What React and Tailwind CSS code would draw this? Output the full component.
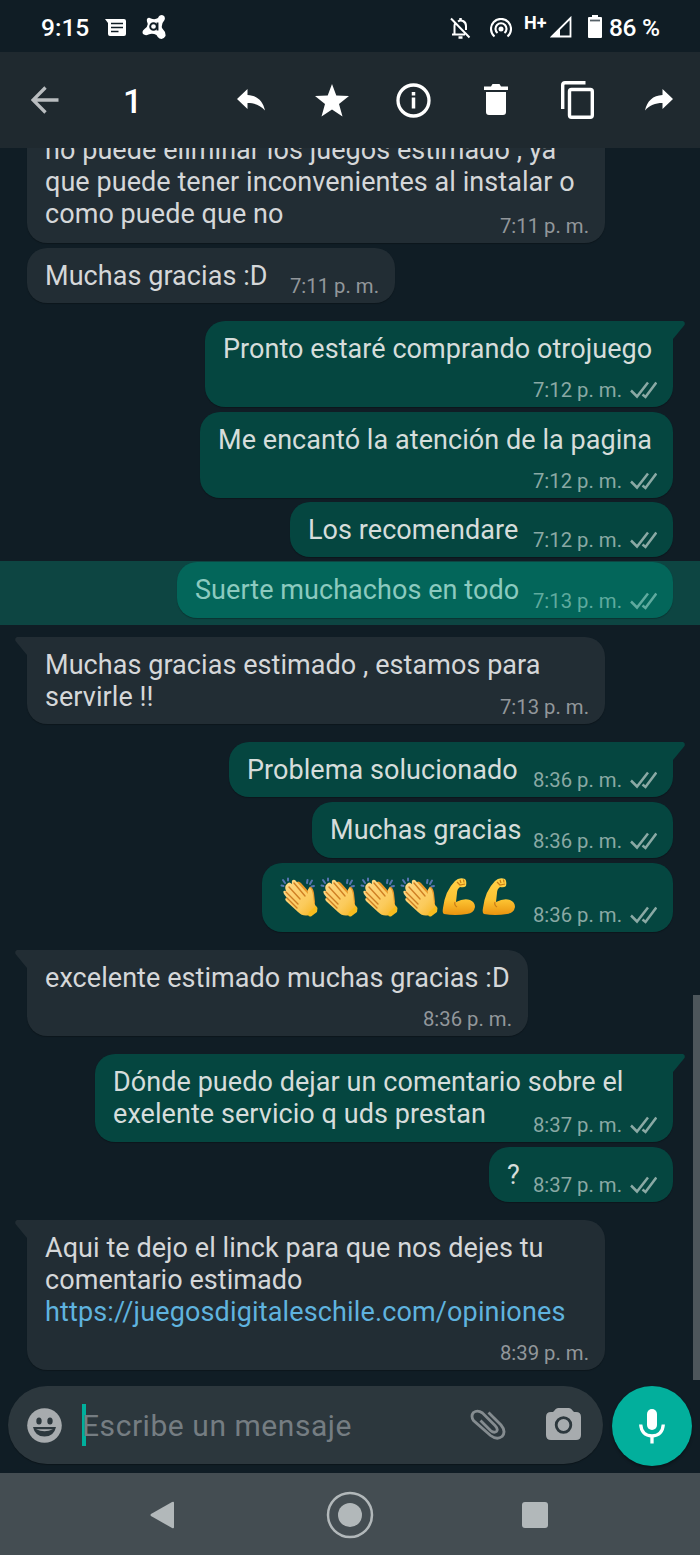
import React from 'react';

const messages = [
  { id: 1, box: 'w-[578px] h-[121px] mb-[5px]', lines: ['no puede eliminar los juegos estimado , ya', 'que puede tener inconvenientes al instalar o', 'como puede que no'], time: '7:11 p. m.' },
  { id: 2, box: 'w-[368px] h-[55px] mb-[18px]', lines: ['Muchas gracias :D'], time: '7:11 p. m.' },
  { id: 3, own: true, tail: true, box: 'w-[468px] h-[86px] mb-[5px]', lines: ['Pronto estaré comprando otrojuego'], time: '7:12 p. m.' },
  { id: 4, own: true, box: 'w-[473px] h-[86px] mb-[4px]', lines: ['Me encantó la atención de la pagina'], time: '7:12 p. m.' },
  { id: 5, own: true, box: 'w-[383px] h-[55px] mb-[5px]', lines: ['Los recomendare'], time: '7:12 p. m.' },
  { id: 6, own: true, selected: true, box: 'w-[496px] h-[56px]', lines: ['Suerte muchachos en todo'], time: '7:13 p. m.' },
  { id: 7, tail: true, box: 'w-[578px] h-[87px] mb-[18px]', lines: ['Muchas gracias estimado , estamos para', 'servirle !!'], time: '7:13 p. m.' },
  { id: 8, own: true, tail: true, box: 'w-[444px] h-[55px] mb-[5px]', lines: ['Problema solucionado'], time: '8:36 p. m.' },
  { id: 9, own: true, box: 'w-[361px] h-[56px] mb-[5px]', lines: ['Muchas gracias'], time: '8:36 p. m.' },
  { id: 10, own: true, box: 'w-[411px] h-[69px] mb-[18px]', emojis: ['clap', 'clap', 'clap', 'clap', 'arm', 'arm'], time: '8:36 p. m.' },
  { id: 11, tail: true, box: 'w-[501px] h-[86px] mb-[18px]', lines: ['excelente estimado muchas gracias :D'], time: '8:36 p. m.' },
  { id: 12, own: true, tail: true, box: 'w-[578px] h-[88px] mb-[5px]', lines: ['Dónde puedo dejar un comentario sobre el', 'exelente servicio q uds prestan'], time: '8:37 p. m.' },
  { id: 13, own: true, box: 'w-[184px] h-[55px] mb-[18px]', lines: ['?'], time: '8:37 p. m.' },
  { id: 14, tail: true, box: 'w-[578px] h-[150px]', lines: ['Aqui te dejo el linck para que nos dejes tu', 'comentario estimado'], link: 'https://juegosdigitaleschile.com/opiniones', time: '8:39 p. m.' },
];

const Clap = () => (
  <svg width="40" height="42" viewBox="0 0 40 42">
    <defs>
      <linearGradient id="palm" x1="0" y1="0" x2="1" y2="1">
        <stop offset="0" stopColor="#ffd98a" />
        <stop offset="0.65" stopColor="#fbcb5c" />
        <stop offset="1" stopColor="#f5b21c" />
      </linearGradient>
    </defs>
    <g stroke="#5675b0" strokeWidth="2" strokeLinecap="round" fill="none">
      <path d="M1.500 8.500l2 .5M3 3l2 3M8 1.500v2M27.500 3l-.5 3M32 3.500l-2 3.500M34 9l-2.500 .5" />
    </g>
    <path d="M16 6q2-3 5 0l8 9q-1-6 2-5 2 1 3 6l1 9q0 7-6 9l-12-10z" fill="#e8982a" />
    <path d="M7 7q2-3 5 0-1-5 3-4l13 14q-1-6 2-6 2 1 3 7l1 8 3 5-8 7q-6 2-11-3L6 24q-2-3 1-3l-3-4q-2-4 2-3-2-5 1-7z" fill="url(#palm)" />
    <path d="M9 10l11 12M14 6l11 13M6 15l12 12M7 21l10 10" stroke="#cf7f24" strokeWidth="1.400" fill="none" strokeLinecap="round" />
    <path d="M28 38l1-3 7-6 1.500 2-.5 4-6 4.500q-2 .5-3-1.500z" fill="#f6bd1f" />
  </svg>
);

const Arm = () => (
  <svg width="40" height="42" viewBox="0 0 40 42">
    <defs>
      <linearGradient id="skin" x1="0" y1="0" x2="0" y2="1">
        <stop offset="0" stopColor="#ffd24a" />
        <stop offset="0.6" stopColor="#fcc231" />
        <stop offset="1" stopColor="#ea940f" />
      </linearGradient>
    </defs>
    <path d="M15 4q4-4 10-2 2 2 1 7-2 2-6 1-3 2-3 6l-1 9q8-4 14-2 5 2 5 7-1 6-8 7-12 2-23 0-2-1-1-6Q5 14 15 4z" fill="url(#skin)" />
    <path d="M15 25q-1 3 2 5M17 5l3 3 5-1M20 3l1 3M23.500 2.500l.5 3" stroke="#c97c17" strokeWidth="1.200" fill="none" />
  </svg>
);

const Ticks = () => (
  <svg className="ml-[8px]" width="27" height="18" viewBox="0 0 27 18" fill="none" stroke="currentColor" strokeWidth="2.500">
    <path d="M1 9.500l6 6L18 1.500M12.500 13.500l3 2.500L26.300 1.500" />
  </svg>
);

const Bubble = ({ message }) => {
  const { own, tail, selected, box, lines, link, emojis, time } = message;
  const color = selected ? 'bg-[#03665a] text-[#8ccabf]' : own ? 'bg-[#054640] text-[#d6dddb]' : 'bg-[#222d34] text-[#d5d7d9]';
  const corner = tail ? (own ? 'rounded-tr-none' : 'rounded-tl-none') : '';

  return (
    <div className={`relative grid shrink-0 rounded-[20px] pl-[18px] pr-[16px] shadow-[0_1px_1px_rgba(0,0,0,0.25)] ${box} ${color} ${corner} ${own ? 'self-end' : 'self-start'}`}>
      {tail && (
        <svg
          className={`absolute top-0 ${own ? 'left-full' : 'right-full -scale-x-100'}`}
          width="13"
          height="18"
          viewBox="0 0 13 18"
          fill={own ? '#054640' : '#222d34'}
        >
          <path d="M0 0h10q2.500 1 1.500 4L0 18z" />
        </svg>
      )}
      <div className="[grid-area:1/1] self-start whitespace-nowrap pt-[11.500px] text-[27px] leading-[32px] tracking-[0.060px]">
        {lines?.map((line) => <p key={line}>{line}</p>)}
        {link && <p className="tracking-[0.140px] text-[#5fb3df]">{link}</p>}
        {emojis && (
          <div className="flex pt-[2px]">
            {emojis.map((emoji, i) => (
              <span key={i} className="w-[40px]">{emoji === 'clap' ? <Clap /> : <Arm />}</span>
            ))}
          </div>
        )}
      </div>
      <div className={`flex items-center self-end justify-self-end pb-[5.500px] text-[20.300px] leading-[24px] [grid-area:1/1] ${selected ? 'text-[#5faa9e]' : own ? 'text-[#8aa9a4]' : 'text-[#92979b]'}`}>
        <span className="whitespace-nowrap">{time}</span>
        {own && <Ticks />}
      </div>
    </div>
  );
};

const StatusBar = () => (
  <div className="flex h-[52px] shrink-0 items-center bg-[#101d25] pl-[41px] pt-[3px] text-[24.500px] font-medium text-white">
    <span className="w-[64px] pt-[1px]">9:15</span>
    <svg width="22" height="18" viewBox="0 0 22 18">
      <path d="M0 0h19q2 0 2 2v13q0 2-2 2H5q-2 0-2-2V4z" fill="#fff" />
      <path d="M6 4.500h12M6 8.500h12M6 12.500h7.500" stroke="#101d25" strokeWidth="1.700" />
    </svg>
    <svg className="ml-[15px] -mt-[2px]" width="24" height="24" viewBox="0 0 24 24">
      <path d="M5 4q1.500-2 4-.5 4 1.500 7-.5 1-3 4-3 4 1 2.500 5-3.500 4-2.500 8 4 4 3.500 8-2 4-6 2.500-2-1.500-3-3.500-4-2-8-.5-3 1.500-5.500-.5-1.500-3 1.500-5 4-3 3-6Q4.500 6 5 4z" fill="#fff" />
      <circle cx="11.500" cy="11.500" r="3.300" fill="none" stroke="#101d25" strokeWidth="1.900" />
      <path d="M15.500 7.500v8" stroke="#101d25" strokeWidth="1.900" />
    </svg>
    <svg className="ml-auto" width="21" height="22" viewBox="0 0 21 22" fill="none" stroke="#fff" strokeWidth="2">
      <path d="M1 1.500l18.500 19M2 17.500h13M4.500 17V9q0-2 1-3M8 4.500q2-1.500 5-.500 3 1.500 3 5v4" />
      <path d="M10.500 1v3M8.500 20.500h4" strokeWidth="2.500" />
    </svg>
    <svg className="ml-[19px]" width="22" height="20" viewBox="0 0 22 20" fill="none" stroke="#fff" strokeWidth="2.100">
      <path d="M4.500 18.500a10 10 0 1 1 13 0M7.500 15a5.500 5.500 0 1 1 7 0" />
      <circle cx="11" cy="11" r="2.500" fill="#fff" stroke="none" />
    </svg>
    <span className="ml-[12px] -mt-[9px] w-[26px] text-[18px] font-bold leading-none">H+</span>
    <svg className="-mt-[2px]" width="22" height="22" viewBox="0 0 22 22">
      <path d="M2 20.500L20.500 2v18.500z" fill="none" stroke="#fff" strokeWidth="1.800" />
      <path d="M1 21l9-9v9z" fill="#fff" />
    </svg>
    <svg className="ml-[16px] -mt-[2px]" width="14" height="23" viewBox="0 0 14 23">
      <path d="M4 0h6v2h3q1 0 1 1v19q0 1-1 1H1q-1 0-1-1V3q0-1 1-1h3z" fill="#fff" />
      <path d="M2 5.500h10" stroke="#566168" strokeWidth="1.800" />
    </svg>
    <span className="ml-[7px] w-[91px] whitespace-nowrap pt-[1px] tracking-[-0.300px]">86 %</span>
  </div>
);

const actions = [
  { name: 'Responder', icon: <svg width="28" height="22" viewBox="0 0 28 22" fill="#fff"><path d="M0 10L10.500 0v6C20 6.500 26 12 28 21.500 23 16 18 14 10.500 14v6z" /></svg> },
  { name: 'Destacar', icon: <svg width="34" height="33" viewBox="0 0 34 33" fill="#fff"><path d="M17 0l4.300 11.500L34 12l-10 8 3.500 12.500L17 25.500 6.500 32.500 10 20 0 12l12.700-.500z" /></svg> },
  { name: 'Info', icon: <svg width="35" height="35" viewBox="0 0 35 35" fill="none" stroke="#fff" strokeWidth="3.300"><circle cx="17.500" cy="17.500" r="15.500" /><path d="M17.500 14.500v11M17.500 9v3.500" strokeWidth="3.500" /></svg> },
  { name: 'Eliminar', icon: <svg width="24" height="32" viewBox="0 0 24 32" fill="#fff"><path d="M0 2.500h7L8.500 0h7L17 2.500h7V6H0zM2 8h20v20q0 3-3 3H5q-3 0-3-3z" /></svg> },
  { name: 'Copiar', icon: <svg width="33" height="38" viewBox="0 0 33 38" fill="none" stroke="#fff" strokeWidth="3.400"><rect x="8.500" y="8.500" width="22.800" height="27.800" rx="2" /><path d="M1.700 28V4q0-2.300 2.300-2.300h20.500" /></svg> },
  { name: 'Reenviar', icon: <svg className="-scale-x-100" width="28" height="22" viewBox="0 0 28 22" fill="#fff"><path d="M0 10L10.500 0v6C20 6.500 26 12 28 21.500 23 16 18 14 10.500 14v6z" /></svg> },
];

const Toolbar = () => (
  <header className="z-10 flex h-[96px] shrink-0 items-center bg-[#1f292f] pl-[31px]">
    <svg width="28" height="28" viewBox="0 0 28 28" fill="none" stroke="#b9bdc0" strokeWidth="3.300">
      <path d="M27.500 14H2M14.500 1.500L2 14l12.500 12.500" />
    </svg>
    <span className="ml-[64px] w-[87px] pt-[2px] text-[34px] font-medium text-white">1</span>
    {actions.map((action) => (
      <button key={action.name} aria-label={action.name} className="flex w-[81.600px] shrink-0 justify-center">{action.icon}</button>
    ))}
  </header>
);

const Composer = () => (
  <div className="flex h-[87px] shrink-0 gap-[9px] px-[8px]">
    <div className="flex h-[78px] w-[595px] items-center rounded-full bg-[#2c373d] pl-[19px] pr-[22px] shadow-[0_1px_1px_rgba(0,0,0,0.3)]">
      <svg width="35" height="35" viewBox="0 0 35 35">
        <circle cx="17.500" cy="17.500" r="17.300" fill="#a7abae" />
        <g fill="#2c373d"><ellipse cx="12" cy="13" rx="2.700" ry="3.600" /><ellipse cx="23" cy="13" rx="2.700" ry="3.600" /><path d="M6 19h23q-2 9.500-11.500 9.500T6 19z" /></g>
        <path d="M9 21.300h17q-8.500 4-17 0z" fill="#a7abae" />
      </svg>
      <span className="ml-[20px] h-[42px] w-[4px] bg-[#00af9c]" />
      <span className="-ml-[4px] flex-1 whitespace-nowrap pt-[1px] text-[30px] tracking-[0.550px] text-[#757d82]">Escribe un mensaje</span>
      <svg width="36" height="32" viewBox="0 0 36 32" fill="none" stroke="#858c90" strokeWidth="2.800">
        <path d="M18.500 3.500l12.500 12.500q5.500 6.500 1 11.500-5 4-11.500-1L3.500 11.500Q.5 7 3.500 3.500q4-3 9 .5L25 16.500q3.500 3.500 1.500 6-2.500 2-6-1L10.500 11.500" />
      </svg>
      <svg className="ml-[40px] -mt-[2px]" width="35" height="32" viewBox="0 0 35 32">
        <path d="M12 0h11q2 0 4 3l1 1h2q5 0 5 5v18q0 5-5 5H5q-5 0-5-5V9q0-5 5-5h2l1-1q2-3 4-3z" fill="#a7abae" />
        <circle cx="17.500" cy="17" r="7.300" fill="none" stroke="#2c373d" strokeWidth="2.800" />
      </svg>
    </div>
    <div className="flex size-[80px] shrink-0 items-center justify-center rounded-full bg-[#02af9c] shadow-[0_2px_3px_rgba(0,0,0,0.35)]">
      <svg width="26" height="35" viewBox="0 0 26 35">
        <rect x="8" y="0" width="10" height="21" rx="5" fill="#fff" />
        <path d="M1.700 15.500q.800 11 11.300 11.500 10.500-.500 11.300-11.500M13 27v7.500" fill="none" stroke="#fff" strokeWidth="3.300" />
      </svg>
    </div>
  </div>
);

const NavBar = () => (
  <nav className="flex h-[82px] shrink-0 items-center bg-[#444d52] pl-[150px] pt-[1px]">
    <svg width="24" height="28" viewBox="0 0 25 28" preserveAspectRatio="none" fill="#b2b8ba"><path d="M25 2v24q0 2-2 1L1 15q-1-1 0-2L23 1q2-1 2 1z" /></svg>
    <svg className="ml-[152px]" width="48" height="48" viewBox="0 0 48 48">
      <circle cx="24" cy="24" r="22" fill="none" stroke="#b2b8ba" strokeWidth="2.500" />
      <circle cx="24" cy="24" r="12" fill="#b2b8ba" />
    </svg>
    <span className="ml-[148px] size-[26px] rounded-[3px] bg-[#b2b8ba]" />
  </nav>
);

const App = () => (
  <div className="flex h-[1555px] w-[700px] flex-col overflow-hidden bg-[#101d25] font-['Roboto',sans-serif]">
    <StatusBar />
    <Toolbar />
    <main className="flex h-[1238px] shrink-0 overflow-hidden">
      <div className="flex w-[693px] flex-col justify-end pb-[16px]">
        {messages.map((message) => (
          message.selected ? (
            <div key={message.id} className="-mr-[7px] mb-[12px] flex h-[64px] shrink-0 flex-col bg-[#0d4542] pr-[27px] pt-[1px] -mt-[1px]">
              <Bubble message={message} />
            </div>
          ) : (
            <div key={message.id} className="flex shrink-0 flex-col pl-[27px] pr-[20px]">
              <Bubble message={message} />
            </div>
          )
        ))}
      </div>
      <div className="mt-[847px] h-[385px] w-[7px] bg-[#4d565b]" />
    </main>
    <Composer />
    <NavBar />
  </div>
);

export default App;
